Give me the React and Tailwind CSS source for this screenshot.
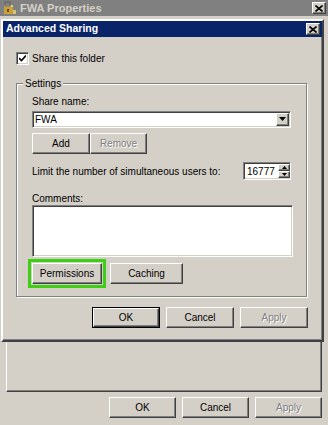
import React from 'react';

const raised =
  'bg-[#d4d0c8] border border-t-white border-l-white border-r-[#404040] border-b-[#404040] shadow-[inset_-1px_-1px_0_#808080]';
const sunken =
  'bg-white border border-t-[#808080] border-l-[#808080] border-r-white border-b-white shadow-[inset_1px_1px_0_#404040,inset_-1px_-1px_0_#d4d0c8]';
const disabledText = 'text-[#808080] [text-shadow:1px_1px_0_#fff]';

function Btn({ children, className = '', disabled, isDefault }) {
  const face = (
    <div className={`flex h-full w-full items-center justify-center ${raised} ${disabled ? disabledText : 'text-black'}`}>
      {children}
    </div>
  );
  if (isDefault) {
    return <div className={`h-[21px] border border-black ${className}`}>{face}</div>;
  }
  return <div className={`h-[21px] ${className}`}>{face}</div>;
}

function CloseBox() {
  return (
    <div className={`flex h-[12px] w-[14px] items-center justify-center ${raised}`}>
      <svg width="8" height="7" viewBox="0 0 8 7">
        <path d="M0.5 0.5 L7.5 6.5 M7.5 0.5 L0.5 6.5" stroke="#000" strokeWidth="1.6" />
      </svg>
    </div>
  );
}

function Arrow({ up, size = 7 }) {
  const h = Math.ceil(size / 2) + 1;
  return (
    <svg width={size} height={h} viewBox={`0 0 ${size} ${h}`}>
      {up ? (
        <path d={`M0 ${Math.ceil(size / 2)} L${size / 2} 0 L${size} ${Math.ceil(size / 2)} Z`} fill="#000" />
      ) : (
        <path d={`M0 0 L${size} 0 L${size / 2} ${Math.ceil(size / 2)} Z`} fill="#000" />
      )}
    </svg>
  );
}

function SharingDialog() {
  return (
    <div className="absolute left-[1px] top-[19px] flex h-[323px] w-[323px] flex-col border-2 border-t-white border-l-white border-r-[#404040] border-b-[#404040] bg-[#d4d0c8] shadow-[inset_-1px_-1px_0_#808080]">
      {/* title bar */}
      <div className="flex h-[16px] items-center justify-between bg-[#0a246a] pl-[3px] pr-[2px]">
        <span className="text-[10.5px] font-bold text-white">Advanced Sharing</span>
        <CloseBox />
      </div>

      <div className="flex flex-col pl-[13px] pr-[15px]">
        <label className="mt-[15px] flex h-[13px] items-center gap-[3px]">
          <span className={`flex h-[13px] w-[13px] items-center justify-center ${sunken}`}>
            <svg width="7" height="7" viewBox="0 0 7 7">
              <path d="M0 3 L2.5 5.5 L7 0.5" stroke="#000" strokeWidth="1.6" fill="none" />
            </svg>
          </span>
          <span>Share this folder</span>
        </label>

        {/* Settings group */}
        <div className="relative mt-[18px] h-[214px] border border-[#808080] shadow-[1px_1px_0_#fff,inset_1px_1px_0_#fff]">
          <span className="absolute -top-[7px] left-[6px] bg-[#d4d0c8] px-[2px] leading-[13px]">Settings</span>
          <div className="flex flex-col pl-[15px] pt-[11px]">
            <span className="leading-[13px]">Share name:</span>
            <div className={`mt-[3px] flex h-[17px] w-[259px] items-center justify-between ${sunken} pl-[2px]`}>
              <span className="leading-[13px]">FWA</span>
              <div className={`mr-[1px] flex h-[13px] w-[13px] items-center justify-center ${raised}`}>
                <Arrow />
              </div>
            </div>

            <div className="mt-[5px] flex">
              <Btn className="w-[58px]">Add</Btn>
              <Btn className="w-[57px]" disabled>Remove</Btn>
            </div>

            <div className="mt-[8px] flex h-[18px] w-[259px] items-center justify-between">
              <span>Limit the number of simultaneous users to:</span>
              <div className={`flex h-[18px] w-[48px] items-center justify-between overflow-hidden ${sunken}`}>
                <span className="whitespace-nowrap pl-[3px] leading-[13px]">16777</span>
                <div className="flex h-[14px] w-[12px] flex-col">
                  <div className={`flex h-[7px] items-center justify-center ${raised}`}>
                    <Arrow up size={5} />
                  </div>
                  <div className={`flex h-[7px] items-center justify-center ${raised}`}>
                    <Arrow size={5} />
                  </div>
                </div>
              </div>
            </div>

            <span className="mt-[13px] leading-[12px]">Comments:</span>
            <div className={`h-[52px] w-[261px] ${sunken}`} />

            <div className="mt-[6px] flex gap-[8px]">
              <Btn className="w-[70px] outline-[3px] outline-offset-[1px] outline-[#3ccf12] outline-solid">
                Permissions
              </Btn>
              <Btn className="w-[73px]">Caching</Btn>
            </div>
          </div>
        </div>

        <div className="mt-[10px] -mr-[1px] flex justify-end gap-[6px]">
          <Btn className="w-[68px]" isDefault>OK</Btn>
          <Btn className="w-[68px]">Cancel</Btn>
          <Btn className="w-[68px]" disabled>Apply</Btn>
        </div>
      </div>
    </div>
  );
}

function FolderLockIcon() {
  return (
    <svg width="14" height="14" viewBox="0 0 14 14">
      <rect x="1" y="4" width="9" height="9" fill="#c9a23c" />
      <rect x="1" y="4" width="9" height="2" fill="#e8cf7a" />
      <rect x="2" y="1" width="5" height="4" fill="none" stroke="#6b6b6b" strokeWidth="1.4" />
      <rect x="10" y="9" width="3" height="4" fill="#d8c27a" />
      <rect x="4" y="8" width="2" height="3" fill="#6a4b10" />
    </svg>
  );
}

export default function App() {
  return (
    <div className="relative h-[425px] w-[328px] overflow-hidden bg-[#d4d0c8] font-['Liberation_Sans',Arial,sans-serif] text-[10px] text-black">
      {/* parent window title */}
      <div className="flex h-[16px] items-center justify-between bg-[#808080] pl-[3px] pr-[2px]">
        <div className="flex items-center gap-[3px]">
          <FolderLockIcon />
          <span className="text-[11px] font-bold text-[#d4d0c8]">FWA Properties</span>
        </div>
        <CloseBox />
      </div>

      {/* parent window body */}
      <div className="flex flex-col pt-[8px]">
        <div className="ml-[6px] h-[368px] w-[316px] border border-t-white border-l-white border-r-[#404040] border-b-[#404040] shadow-[inset_-1px_-1px_0_#808080]" />
        <div className="mt-[5px] flex justify-end gap-[6px] pr-[6px]">
          <Btn className="w-[67px]">OK</Btn>
          <Btn className="w-[67px]">Cancel</Btn>
          <Btn className="w-[67px]" disabled>Apply</Btn>
        </div>
      </div>

      <SharingDialog />
    </div>
  );
}
